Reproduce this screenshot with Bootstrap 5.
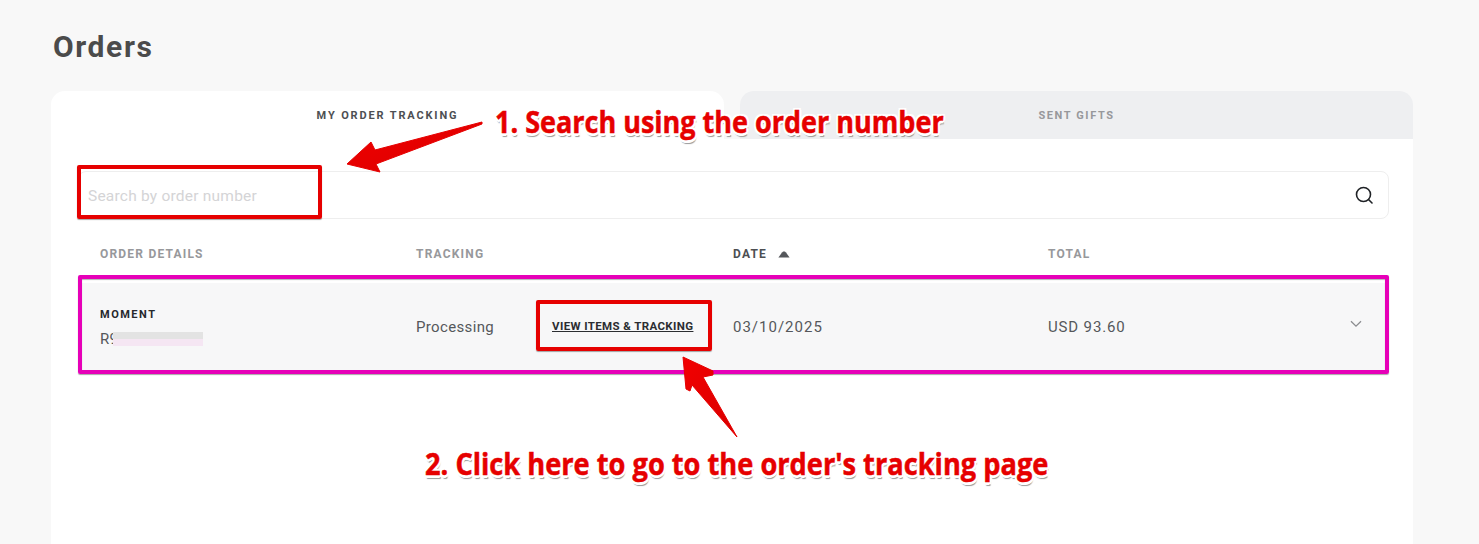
<!DOCTYPE html>
<html lang="en">
<head>
  <meta charset="UTF-8" />
  <meta name="viewport" content="width=device-width, initial-scale=1.0"/>
  <title>Orders</title>
  <link href="https://cdn.jsdelivr.net/npm/bootstrap@5.3.2/dist/css/bootstrap.min.css" rel="stylesheet" />
  <style>
    html, body { height: 544px; overflow: hidden; }
    body {
      background: #f8f8f8;
      font-family: Roboto, "Liberation Sans", sans-serif;
      color: #4a4a4a;
      position: relative;
    }
    .page-wrap { padding: 28px 66px 0 51px; }
    .page-title {
      font-size: 30px;
      line-height: 38px;
      font-weight: 700;
      letter-spacing: 1.6px;
      color: #4b4b4b;
      margin: 0 0 25px 2px;
    }
    .tab-row { gap: 16px; }
    .tab-item {
      flex: 1 1 0;
      height: 48px;
      border-radius: 14px 14px 0 0;
      padding-top: 18px;
      text-align: center;
      font-size: 11px;
      line-height: 14px;
      font-weight: 700;
    }
    .tab-on { background: #fff; color: #4d4f53; letter-spacing: 1.85px; }
    .tab-off { background: #eeeff1; color: #97989b; letter-spacing: 1.6px; }
    .tab-panel { background: #fff; padding: 32px 24px 0 27px; height: 405px; }
    .search-box {
      height: 48px;
      border: 1px solid #eeeeee;
      border-radius: 8px;
      padding: 0 14px 0 9px;
    }
    .search-box input {
      border: 0;
      outline: 0;
      flex: 1;
      padding: 4px 0 0;
      font-size: 15.5px;
      letter-spacing: .22px;
      color: #333;
      background: transparent;
    }
    .search-box input::placeholder { color: #d4d4d6; opacity: 1; }
    .order-grid { display: grid; grid-template-columns: 316px 317px 315px 1fr; padding-left: 22px; }
    .order-head {
      height: 64px;
      padding-top: 6px;
      align-items: center;
      font-size: 12px;
      font-weight: 700;
      letter-spacing: 1.2px;
      color: #97989b;
    }
    .order-head .sorted { color: #4d4f53; }
    .sort-up { display: inline-block; margin-left: 7px; vertical-align: 0; }
    .order-row {
      height: 90px;
      padding-bottom: 2px;
      align-items: center;
      background: #f7f7f8;
      font-size: 15px;
      letter-spacing: .35px;
      color: #55575b;
    }
    .brand-name { font-size: 11px; font-weight: 700; letter-spacing: 1.5px; color: #26282c; line-height: 14px; margin: 2px 0 7px; }
    .order-num { position: relative; line-height: 20px; height: 20px; }
    .blur-patch {
      position: absolute; left: 13px; top: 3px; width: 90px; height: 14px;
      background: linear-gradient(#e3e3e3 0 50%, #f5e6f3 50% 100%);
    }
    .track-cell { gap: 0; }
    .track-status { width: 136px; }
    .track-link {
      font-size: 11.5px;
      font-weight: 700;
      letter-spacing: .38px;
      color: #2b2d31;
      text-decoration: underline;
      white-space: nowrap;
    }
    .date-cell { letter-spacing: 1px; }
    .total-cell { padding-right: 27px; letter-spacing: .85px; }
    .row-caret { margin-top: -6px; }
    .mark-box { position: absolute; border: 4px solid #e60000; border-radius: 2px; box-shadow: 0 1px 1px rgba(0,0,0,.35); }
    .mark-search { left: 77px; top: 165px; width: 245px; height: 54px; }
    .mark-view { left: 536px; top: 300px; width: 176px; height: 51px; }
    .mark-row { left: 78px; top: 275px; width: 1311px; height: 99px; border-color: #e600b8; box-shadow: 0 1px 1px rgba(0,0,0,.35), inset 0 1px 1px rgba(0,0,0,.3); }
    .note-text {
      position: absolute;
      font-family: "Open Sans", "Liberation Sans", sans-serif;
      font-weight: 700;
      font-size: 31px;
      line-height: 40px;
      color: #e60000;
      -webkit-text-stroke: .5px #e60000;
      white-space: nowrap;
      transform-origin: left center;
      text-shadow: 2.5px 0 0 #fff, -2.5px 0 0 #fff, 0 2.5px 0 #fff, 0 -2.5px 0 #fff, 2px 2px 0 #fff, -2px 2px 0 #fff, 2px -2px 0 #fff, -2px -2px 0 #fff, 1px 3.5px 1px #999;
    }
    .note-one { left: 495px; top: 101px; transform: scaleX(.871); }
    .note-two { left: 425px; top: 443px; transform: scaleX(.878); }
    .note-arrow { position: absolute; left: 0; top: 0; pointer-events: none; }
  </style>
</head>
<body>
  <div class="page-wrap">
    <h1 class="page-title">Orders</h1>

    <div class="d-flex tab-row">
      <div class="tab-item tab-on">MY ORDER TRACKING</div>
      <div class="tab-item tab-off">SENT GIFTS</div>
    </div>

    <div class="tab-panel">
      <div class="search-box d-flex align-items-center">
        <input type="text" placeholder="Search by order number" />
        <svg width="20" height="20" viewBox="0 0 20 20" fill="none" stroke="#1f2226" stroke-width="1.6" stroke-linecap="round">
          <circle cx="9.5" cy="9.5" r="7"/>
          <path d="M14.5 14.5 18 18"/>
        </svg>
      </div>

      <div class="order-grid order-head">
        <div>ORDER DETAILS</div>
        <div>TRACKING</div>
        <div class="sorted">DATE
          <svg class="sort-up" width="12" height="7" viewBox="0 0 12 7"><path d="M6 .5C7 .5 7.5 1 8 1.6L11.6 6.5H.4L4 1.6C4.5 1 5 .5 6 .5Z" fill="#55575b"/></svg>
        </div>
        <div>TOTAL</div>
      </div>

      <div class="order-grid order-row">
        <div>
          <div class="brand-name">MOMENT</div>
          <div class="order-num">R9<span class="blur-patch"></span></div>
        </div>
        <div class="track-cell d-flex align-items-center">
          <span class="track-status">Processing</span>
          <a class="track-link" href="#">VIEW ITEMS &amp; TRACKING</a>
        </div>
        <div class="date-cell">03/10/2025</div>
        <div class="total-cell d-flex justify-content-between align-items-center">
          <span>USD 93.60</span>
          <svg class="row-caret" width="12" height="8" viewBox="0 0 12 8" fill="none" stroke="#8b8c90" stroke-width="1.3"><path d="M1 1.2 6 6.2 11 1.2"/></svg>
        </div>
      </div>
    </div>
  </div>

  <!-- annotations drawn over the page -->
  <div class="mark-box mark-search"></div>
  <div class="mark-box mark-view"></div>
  <div class="mark-box mark-row"></div>

  <svg class="note-arrow" width="1479" height="544" viewBox="0 0 1479 544">
    <defs>
      <linearGradient id="arrowFill" x1="0" y1="0" x2="1" y2="1">
        <stop offset="0" stop-color="#f20000"/>
        <stop offset="1" stop-color="#d80000"/>
      </linearGradient>
    </defs>
    <path d="M482 122 375 150 371 142 347 164 380 172 376 164 482 124Z" fill="url(#arrowFill)" stroke="#e60000" stroke-width="1" stroke-linejoin="round"/>
    <path d="M683 357 713 371 713 375 703 377 737 437 692 385 690 391 686 389Z" fill="url(#arrowFill)" stroke="#e60000" stroke-width="1" stroke-linejoin="round"/>
  </svg>

  <div class="note-text note-one">1. Search using the order number</div>
  <div class="note-text note-two">2. Click here to go to the order's tracking page</div>

  <script src="https://cdn.jsdelivr.net/npm/bootstrap@5.3.2/dist/js/bootstrap.bundle.min.js"></script>
</body>
</html>
